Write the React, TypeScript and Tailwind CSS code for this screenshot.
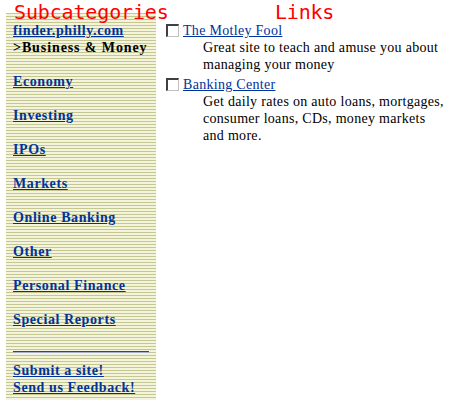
const subcats = [
  'Economy',
  'Investing',
  'IPOs',
  'Markets',
  'Online Banking',
  'Other',
  'Personal Finance',
  'Special Reports',
];

const links = [
  {
    title: 'The Motley Fool',
    desc: 'Great site to teach and amuse you about managing your money',
  },
  {
    title: 'Banking Center',
    desc: 'Get daily rates on auto loans, mortgages, consumer loans, CDs, money markets and more.',
  },
];

// old-style 3D checkbox
const Check = () => (
  <span className="inline-block w-[13px] h-[13px] bg-white border-t-2 border-l-2 border-r border-b border-t-[#404040] border-l-[#404040] border-r-[#c0c0c0] border-b-[#c0c0c0] shrink-0 mt-[2px]" />
);

export default function App() {
  return (
    <div className="relative w-[449px] h-[410px] bg-white font-['Liberation_Serif',serif] text-[14px] leading-[17px]">
      {/* red labels over the top */}
      <div className="absolute left-[14px] top-[0px] text-[20px] leading-[24px] text-[#ff0000] font-['DejaVu_Sans_Mono',monospace] tracking-[-0.15px]">
        Subcategories
      </div>
      <div className="absolute left-[275px] top-[0px] text-[20px] leading-[24px] text-[#ff0000] font-['DejaVu_Sans_Mono',monospace] tracking-[-0.2px]">
        Links
      </div>

      <div className="flex">
        {/* sidebar */}
        <div className="ml-[6px] mt-[13px] w-[150px] h-[387px] pl-[7px] pt-[9px] bg-[repeating-linear-gradient(to_bottom,#c4c78f_0px,#c4c78f_1px,#f4f4dc_1px,#f4f4dc_3px)] font-bold tracking-[0.6px] whitespace-nowrap">
          <a href="#" className="block text-[#003399] underline">finder.philly.com</a>
          <div className="text-black tracking-[0.9px]">&gt;Business &amp; Money</div>
          <div className="flex flex-col gap-[17px] mt-[17px]">
            {subcats.map((s) => (
              <a key={s} href="#" className="block text-[#003399] underline">
                {s}
              </a>
            ))}
          </div>
          <div className="mt-[23px] mb-[9px] w-[136px] h-[2px] border-t border-[#334477] border-b border-b-[#a8b0c8]" />
          <a href="#" className="block text-[#003399] underline">Submit a site!</a>
          <a href="#" className="block text-[#003399] underline">Send us Feedback!</a>
        </div>

        {/* links */}
        <div className="ml-[10px] mt-[22px] flex flex-col gap-[3px] tracking-[0.3px]">
          {links.map((l) => (
            <div key={l.title}>
              <div className="flex items-start gap-[4px]">
                <Check />
                <a href="#" className="text-[#003399] underline">{l.title}</a>
              </div>
              <div className="pl-[37px] w-[283px] text-black">{l.desc}</div>
            </div>
          ))}
        </div>
      </div>
    </div>
  );
}
